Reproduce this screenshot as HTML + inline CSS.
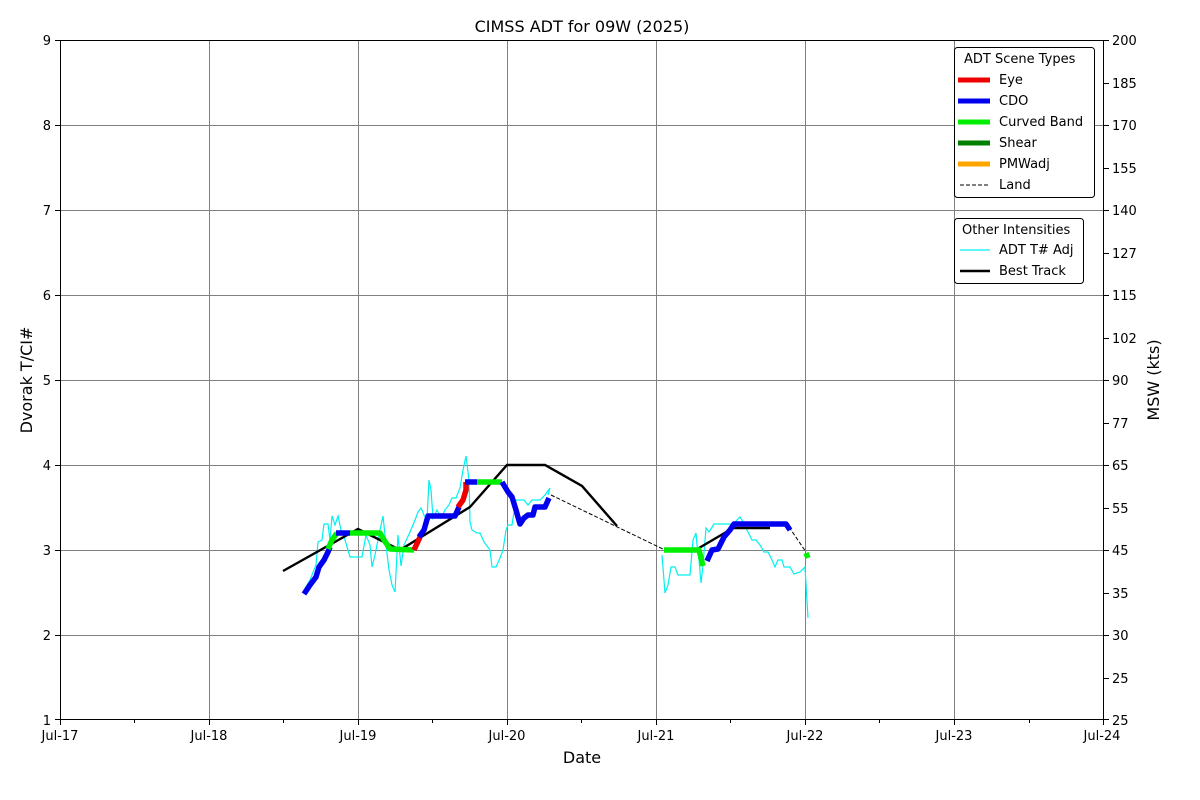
<!DOCTYPE html>
<html><head><style>body{margin:0;background:#fff}svg{display:block;font-family:"DejaVu Sans","Liberation Sans",sans-serif}</style></head>
<body>
<svg width="1200" height="800" viewBox="0 0 1200 800" xmlns="http://www.w3.org/2000/svg">
<rect width="1200" height="800" fill="#fff"/>
<g stroke="#808080" stroke-width="1">
<line x1="209.5" y1="40" x2="209.5" y2="720"/><line x1="358.5" y1="40" x2="358.5" y2="720"/><line x1="507.5" y1="40" x2="507.5" y2="720"/><line x1="656.5" y1="40" x2="656.5" y2="720"/><line x1="805.5" y1="40" x2="805.5" y2="720"/><line x1="954.5" y1="40" x2="954.5" y2="720"/>
<line x1="60" y1="125.5" x2="1104" y2="125.5"/><line x1="60" y1="210.5" x2="1104" y2="210.5"/><line x1="60" y1="295.5" x2="1104" y2="295.5"/><line x1="60" y1="380.5" x2="1104" y2="380.5"/><line x1="60" y1="465.5" x2="1104" y2="465.5"/><line x1="60" y1="550.5" x2="1104" y2="550.5"/><line x1="60" y1="635.5" x2="1104" y2="635.5"/>
</g>
<polyline fill="none" stroke="#00f0f0" stroke-width="1.2" points="304,590 310,580 316,565 318,542 322,540 324,524 328,524 330,540 332,516 335,525 338,516 341,530 345,540 350,557 356,557 362,557 366,535 370,545 372,567 375,555 380,530 383,516 386,545 389,570 392,585 395,592 398,535 401,566 404,545 410,532 415,520 418,512 421,508 424,515 427,520 429,480 431,490 433,518 437,510 441,518 445,510 449,505 452,498 456,498 460,488 463,470 466,456 469,480 470,522 472,530 477,533 480,533 484,542 490,550 492,567 496,567 500,558 503,550 506,530 508,525 512,525 516,500 520,500 524,500 528,505 532,500 540,500 545,495 550,488 548,495"/>
<polyline fill="none" stroke="#00f0f0" stroke-width="1.2" points="662,555 665,593 668,585 671,567 675,567 678,575 684,575 690,575 693,540 696,533 697,545 699,560 701,583 703,565 706,528 709,532 714,524 720,524 726,524 733,524 740,517 742,520 748,532 752,540 756,540 760,545 764,552 768,552 772,560 775,567 778,560 782,560 784,567 790,567 794,574 800,572 805,567 808,618"/>
<polyline fill="none" stroke="#000" stroke-width="1" stroke-dasharray="4,2" points="551,495 665,550"/>
<polyline fill="none" stroke="#000" stroke-width="1" stroke-dasharray="4,2" points="789,527 806,552"/>
<polyline fill="none" stroke="#000" stroke-width="2.4" points="283,571 358,529 400,550 470,507 507,465 545,465 582,486 617,526"/>
<polyline fill="none" stroke="#000" stroke-width="2.4" points="699,548 728,531 733,528 770,528"/>
<g fill="none" stroke-width="5.5" stroke-linejoin="round">
<polyline stroke="#0000ee" points="304,594 310,585 316,577 319,567 324,560 328,552 330,547"/>
<polyline stroke="#00ee00" points="328,549 332,540 337,533"/>
<polyline stroke="#0000ee" points="336,533 350,533"/>
<polyline stroke="#00ee00" points="350,533 380,533 384,540 390,549 414,550"/>
<polyline stroke="#ee0000" points="414,550 420,537"/>
<polyline stroke="#0000ee" points="419,537 424,530 428,516 455,516 459,507"/>
<polyline stroke="#ee0000" points="458,507 463,500 466,490 466,482"/>
<polyline stroke="#0000ee" points="465,482 477,482"/>
<polyline stroke="#00ee00" points="477,482 502,482"/>
<polyline stroke="#0000ee" points="502,482 508,492 512,497 516,510 520,524 524,518 528,515 533,515 535,507 545,507 549,498"/>
<polyline stroke="#00ee00" points="664,550 699,550 701,558 703,566"/>
<polyline stroke="#0000ee" points="707,561 712,550 718,549 724,537 730,530 734,524 786,524 790,530"/>
<polyline stroke="#00ee00" points="806,553 808,558"/>
</g>
<rect x="60.5" y="40.5" width="1043" height="679" fill="none" stroke="#000" stroke-width="1"/>
<g stroke="#000" stroke-width="1">
<path d="M60.5,720v5M209.5,720v5M358.5,720v5M507.5,720v5M656.5,720v5M805.5,720v5M954.5,720v5M1103.5,720v5M134.5,720v3M283.5,720v3M432.5,720v3M581.5,720v3M730.5,720v3M879.5,720v3M1029.5,720v3"/>
<path d="M60,40.5h-5M60,125.5h-5M60,210.5h-5M60,295.5h-5M60,380.5h-5M60,465.5h-5M60,550.5h-5M60,635.5h-5M60,719.5h-5"/>
<path d="M1104,40.5h5M1104,83.5h5M1104,125.5h5M1104,168.5h5M1104,210.5h5M1104,253.5h5M1104,295.5h5M1104,338.5h5M1104,380.5h5M1104,423.5h5M1104,465.5h5M1104,508.5h5M1104,550.5h5M1104,593.5h5M1104,635.5h5M1104,678.5h5M1104,719.5h5"/>
</g>
<g font-size="13" fill="#000" text-anchor="middle">
<text x="60" y="740">Jul-17</text><text x="209" y="740">Jul-18</text><text x="358" y="740">Jul-19</text><text x="507" y="740">Jul-20</text><text x="656" y="740">Jul-21</text><text x="805" y="740">Jul-22</text><text x="954" y="740">Jul-23</text><text x="1102" y="740">Jul-24</text>
</g>
<g font-size="13" fill="#000" text-anchor="end">
<text x="51" y="45">9</text><text x="51" y="130">8</text><text x="51" y="215">7</text><text x="51" y="300">6</text><text x="51" y="385">5</text><text x="51" y="470">4</text><text x="51" y="555">3</text><text x="51" y="640">2</text><text x="51" y="725">1</text>
</g>
<g font-size="13" fill="#000">
<text x="1112" y="45">200</text><text x="1112" y="88">185</text><text x="1112" y="130">170</text><text x="1112" y="173">155</text><text x="1112" y="215">140</text><text x="1112" y="258">127</text><text x="1112" y="300">115</text><text x="1112" y="343">102</text><text x="1112" y="385">90</text><text x="1112" y="428">77</text><text x="1112" y="470">65</text><text x="1112" y="513">55</text><text x="1112" y="555">45</text><text x="1112" y="598">35</text><text x="1112" y="640">30</text><text x="1112" y="683">25</text><text x="1112" y="725">25</text>
</g>
<text x="582" y="32" font-size="16" text-anchor="middle">CIMSS ADT for 09W (2025)</text>
<text x="582" y="763" font-size="16" text-anchor="middle">Date</text>
<text transform="translate(32,380) rotate(-90)" font-size="16" text-anchor="middle">Dvorak T/CI#</text>
<text transform="translate(1159,380) rotate(-90)" font-size="16" text-anchor="middle">MSW (kts)</text>
<rect x="954.5" y="47.5" width="140" height="150" rx="3" fill="#fff" stroke="#000" stroke-width="1"/>
<g font-size="13" fill="#000">
<text x="964" y="63">ADT Scene Types</text>
<text x="999" y="84">Eye</text><text x="999" y="105">CDO</text><text x="999" y="126">Curved Band</text><text x="999" y="147">Shear</text><text x="999" y="168">PMWadj</text><text x="999" y="189">Land</text>
</g>
<g stroke-width="5"><line x1="958" y1="80" x2="990" y2="80" stroke="#ee0000"/><line x1="958" y1="101" x2="990" y2="101" stroke="#0000ee"/><line x1="958" y1="122" x2="990" y2="122" stroke="#00ee00"/><line x1="958" y1="143" x2="990" y2="143" stroke="#008000"/><line x1="958" y1="164" x2="990" y2="164" stroke="#ffa500"/></g>
<line x1="960" y1="185" x2="990" y2="185" stroke="#000" stroke-width="1" stroke-dasharray="4,2"/>
<rect x="954.5" y="218.5" width="129" height="65" rx="3" fill="#fff" stroke="#000" stroke-width="1"/>
<g font-size="13" fill="#000">
<text x="962" y="234">Other Intensities</text>
<text x="999" y="254">ADT T# Adj</text><text x="999" y="275">Best Track</text>
</g>
<line x1="960" y1="250" x2="990" y2="250" stroke="#00f0f0" stroke-width="1.2"/>
<line x1="960" y1="271" x2="990" y2="271" stroke="#000" stroke-width="2.4"/>
</svg>
</body></html>
